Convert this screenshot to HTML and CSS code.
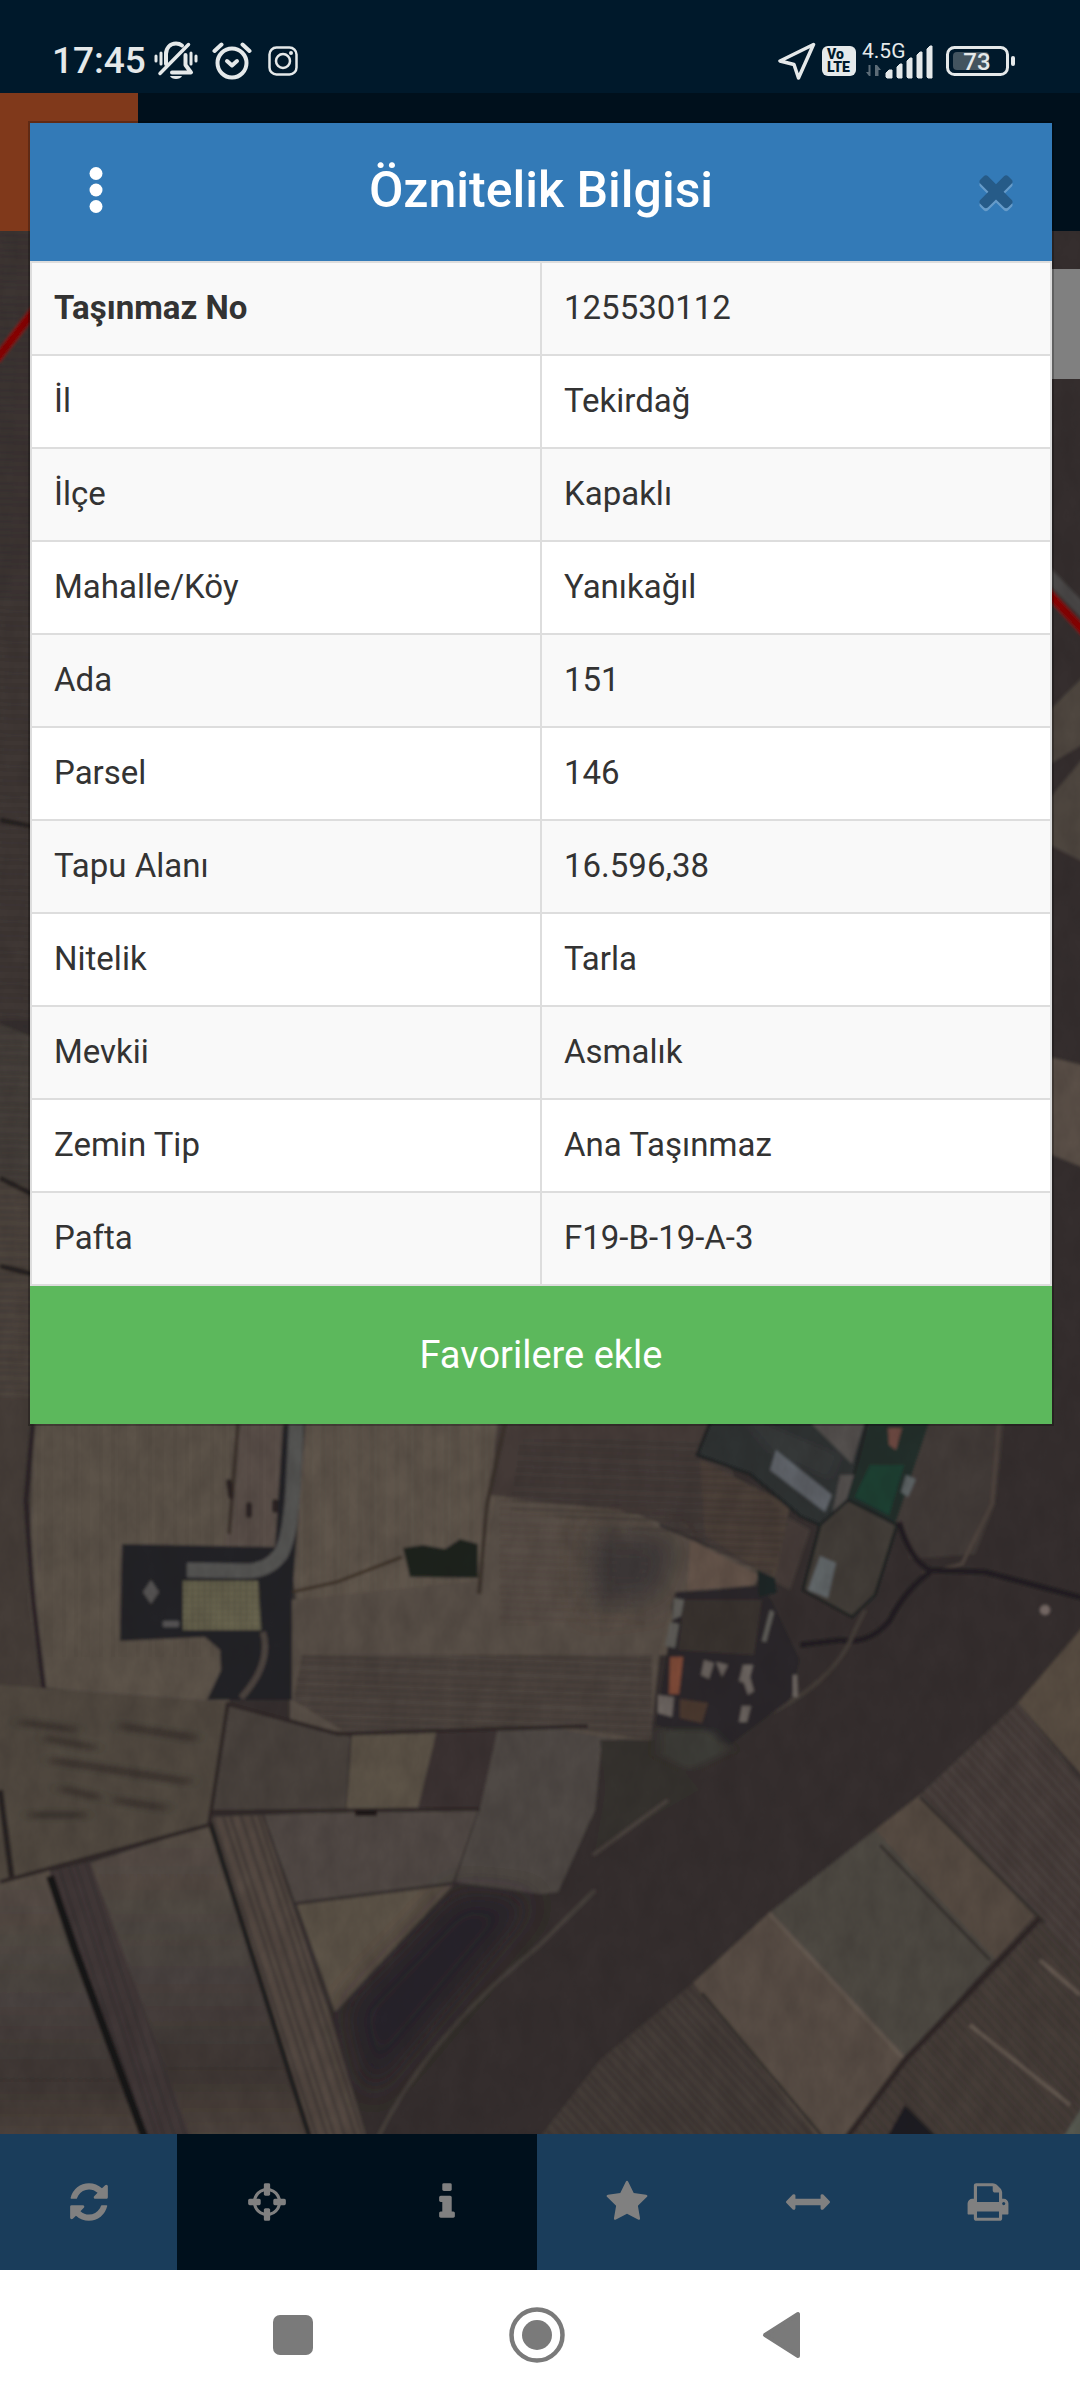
FILE: index.html
```html
<!DOCTYPE html>
<html lang="tr">
<head>
    <meta charset="UTF-8">
    <meta name="viewport" content="width=device-width, initial-scale=1.0">
    <title>Parsel Sorgu</title>
    <link rel="stylesheet" href="styles.css">
</head>
<body>
    <!-- Durum çubuğu -->
    <div class="status-bar">
        <div class="status-left">
            <span class="clock">17:45</span>
            <svg class="icon-bell" width="44" height="40" viewBox="0 0 44 40" fill="none" stroke="currentColor" stroke-width="4" stroke-linecap="round">
                <path d="M2 15v5M7 12v11M37 12v11M42 15v5" stroke-width="3"/>
                <path d="M12 23V13c0-6 4-10.500 10-10.500 2.500 0 4.500.8 6 2"/>
                <path d="M34.500 3.500 6 32.500" stroke-width="3.500"/>
                <path d="M31.500 14v10l5.500 7.500H18" stroke-linejoin="round"/>
                <path d="M16 35h12c-1.500 4-10.500 4-12 0z" fill="currentColor" stroke="none"/>
            </svg>
            <svg class="icon-alarm" width="40" height="40" viewBox="0 0 40 40" fill="none" stroke="currentColor" stroke-width="4" stroke-linecap="round">
                <circle cx="20" cy="22" r="14.500"/>
                <path d="m2.500 10 7-6.500M37.500 10l-7-6.500"/>
                <path d="m15 20 5 4.500 5-4.500" stroke-linejoin="round"/>
            </svg>
            <svg class="icon-insta" width="30" height="30" viewBox="0 0 30 30" fill="none" stroke="currentColor" stroke-width="2.500">
                <rect x="1.500" y="1.500" width="27" height="27" rx="7"/>
                <circle cx="15" cy="15" r="7"/>
                <circle cx="23" cy="7" r="2" fill="currentColor" stroke="none"/>
            </svg>
        </div>
        <div class="status-right">
            <svg width="38" height="38" viewBox="0 0 38 38" fill="none" stroke="currentColor" stroke-width="3.500" stroke-linejoin="round">
                <path d="M35.500 2.500 2 19l14 3.500 4.500 13.500z"/>
            </svg>
            <span class="volte"><span>Vo</span><span>LTE</span></span>
            <svg class="signal" width="72" height="36" viewBox="0 0 72 36" fill="currentColor">
                <text x="0" y="15" font-size="21">4.5G</text>
                <path d="M8.500 22v11H7l-3-4h2.500v-7zM13 33V22h2l4 5h-2.500v6z" opacity=".4"/>
                <path d="M24 34v-4l3-3h3v8h-5zM35 34V24l3-3h2v14h-4zM45 34V18l3-3h2v20h-4zM55 34V12l3-3h2v26h-4zM65 34V6l3-3h2v32h-4z" stroke="currentColor"/>
            </svg>
            <svg class="battery" width="70" height="30" viewBox="0 0 70 30">
                <rect x="1.500" y="1.500" width="60" height="27" rx="7" fill="none" stroke="currentColor" stroke-width="3"/>
                <rect x="7" y="6" width="36" height="18" rx="4" fill="#43545f"/>
                <rect x="65" y="10" width="4" height="10" rx="2" fill="currentColor"/>
                <text x="31" y="24" font-size="24" font-weight="500" text-anchor="middle" fill="currentColor">73</text>
            </svg>
        </div>
    </div>

    <header class="app-header">
        <div class="logo"></div>
    </header>

    <!-- Harita -->
    <main class="map">
        <svg class="map-image" viewBox="0 231 1080 1903" preserveAspectRatio="xMidYMid slice" aria-hidden="true">
            <defs>
                <pattern id="v" width="37" height="40" patternUnits="userSpaceOnUse"><path d="M2 0v40M9 0v40M14 0v40M27 0v40" stroke="#3d3531" stroke-width="2" opacity=".2"/></pattern>
                <pattern id="h" width="40" height="31" patternUnits="userSpaceOnUse" patternTransform="rotate(2)"><path d="M0 2h40M0 8h40M0 18h40M0 25h40" stroke="#2c2625" stroke-width="3" opacity=".3"/></pattern>
                <pattern id="d" width="23" height="40" patternUnits="userSpaceOnUse" patternTransform="rotate(-42)"><path d="M2 0v40M10 0v40M16 0v40" stroke="#2c2625" stroke-width="3" opacity=".3"/></pattern>
                <pattern id="s" width="27" height="40" patternUnits="userSpaceOnUse" patternTransform="rotate(-18)"><path d="M2 0v40M9 0v40M19 0v40" stroke="#2a2425" stroke-width="3" opacity=".4"/></pattern>
                <pattern id="g" width="6" height="6" patternUnits="userSpaceOnUse"><path d="M0 0h6M0 0v6" stroke="#4b4838" stroke-width="2"/></pattern>
                <linearGradient id="fade" x1="0" y1="0" x2="0" y2="1">
                    <stop offset="0" stop-color="#574e45"/>
                    <stop offset=".45" stop-color="#4a4340"/>
                    <stop offset=".75" stop-color="#3e3633"/>
                    <stop offset="1" stop-color="#51473f"/>
                </linearGradient>
                <filter id="soft" x="-.02" y="-.02" width="1.04" height="1.04"><feGaussianBlur stdDeviation="1.500"/></filter>
                <filter id="blot" x="-1" y="-1" width="3" height="3"><feGaussianBlur stdDeviation="14"/></filter>
                <filter id="smear" x="-.2" y="-.2" width="1.400" height="1.400"><feGaussianBlur stdDeviation="6 2"/></filter>
                <filter id="grain" x="0" y="0" width="1" height="1" color-interpolation-filters="sRGB">
                    <feTurbulence type="fractalNoise" baseFrequency=".05 .03" numOctaves="4" seed="4"/>
                    <feColorMatrix values="0 0 0 0 .12  0 0 0 0 .1  0 0 0 0 .1  1.2 0 0 0 -.3"/>
                </filter>
            </defs>
            <g filter="url(#soft)">
                <rect x="-20" y="211" width="1120" height="1943" fill="#352f2e"/>

                <!-- sol kenar -->
                <path d="M-10 221h50v380h-50z" fill="#3c3532"/>
                <path d="M-10 600h50v420h-50z" fill="#403835"/>
                <path d="M-10 1020l50 20v150l-50-15z" fill="#46413b"/>
                <path d="M-10 1175l50 15v260h-50z" fill="#4e453d"/>
                <path d="M0 820l40 8M0 1178l40 20M0 1266l40 10" stroke="#221e1d" stroke-width="5"/>
                <path d="M-10 221h50v1210h-50z" fill="url(#h)"/>
                <path d="M-4 360l44-57" stroke="#8b0000" stroke-width="9"/>

                <!-- sağ kenar -->
                <path d="M1040 720l50-50v70l-50 30zM1040 810l50-60v115l-50-25z" fill="#50473f"/>
                <path d="M1040 1055l50 12v103l-50-20z" fill="#5a4f47"/>
                <path d="M1040 566l50 52" stroke="#4b4a48" stroke-width="12"/>
                <path d="M1040 584l50 54" stroke="#8b0000" stroke-width="9"/>

                <!-- üst tarlalar -->
                <path d="M-10 1400h70l-18 290H-10z" fill="#453d38"/>
                <path d="M34 1400h210l-15 310-187-23-13-87z" fill="#5c524a"/>
                <path d="M243 1400h50l-6 150h-62z" fill="#5a5048"/>
                <path d="M303 1400h205l-10 95 160 20 20 140-373 2-12-80z" fill="#5e554b"/>
                <path d="M34 1400h475l-20 257H42z" fill="url(#v)"/>
                <path d="M500 1400h200l40 90 70 40-20 60-90-50-60-25-150-20z" fill="#443b38"/>
                <path d="M700 1460l90 45-15 75-70-45z" fill="#4b4039"/>
                <path d="M495 1497l45 5 80 8 100 42 42 20-7 13-45 5-35 2-15 58-10 90-360-10V1600l192-20z" fill="#594f46"/>
                <path d="M590 1530l90 8-20 60-70 10z" fill="#3e3938" filter="url(#blot)"/>
                <path d="M690 1540l68 35-5 10-65 5z" fill="#63534a"/>
                <path d="M500 1495l150 20-5 110H500z" fill="url(#h)" opacity=".4"/>
                <path d="M302 1655h350v85l-107-15-200 7-52-32z" fill="#4e453f"/>
                <path d="M302 1655h350v85l-107-15-200 7-52-32z" fill="url(#h)"/>
                <path d="M520 1440h190l80 80-20 60-90-45-170-25z" fill="url(#h)"/>
                <path d="M33 1424l-7 76 7 100 11 90" fill="none" stroke="#2a2425" stroke-width="5"/>
                <path d="M505 1424l-18 80-8 90M238 1424l-9 110" fill="none" stroke="#3a312c" stroke-width="4"/>
                <path d="M229 1482l2 14M249 1505v10M275 1502v8" stroke="#2a2422" stroke-width="6" stroke-linecap="round"/>
                <path d="M292 1592l45-10 65-25" fill="none" stroke="#3c3026" stroke-width="3"/>
                <path d="M403 1548l20-3 22 4 15-10 18 5v34l-68-1z" fill="#1b201e"/>

                <!-- tesis -->
                <path d="M122 1544l153 3 8-123h22l-13 176v100h-85l14-30-1-20-15-13-85 4z" fill="#242325"/>
                <path d="M297 1410l-4 80q-3 50-13 65-12 16-35 16l-58-1" fill="none" stroke="#555453" stroke-width="15"/>
                <path d="M183 1581h75l3 49h-78z" fill="#696550"/>
                <path d="M183 1581h75l3 49h-78z" fill="url(#g)" opacity=".6"/>
                <path d="M151 1580l8 12-8 12-8-12zM163 1621h16v6h-16z" fill="#555252"/>
                <path d="M263 1632q9 32-22 66" fill="none" stroke="#4d443f" stroke-width="6"/>

                <!-- orta tarlalar -->
                <path d="M-10 1684l238 18-19 123-219 60z" fill="#514940"/>
                <path d="M20 1722l55 8M120 1726l75 12M45 1738l50 10M50 1760l140 22M60 1788l40 10M115 1800l50 8M30 1815h55" stroke="#302a26" stroke-width="7" opacity=".7" filter="url(#smear)"/>
                <path d="M0 1790l12 90" stroke="#282221" stroke-width="6"/>
                <path d="M228 1702l122 35-5 78-135-3z" fill="#4a433e"/>
                <path d="M352 1735l85-3-19 78-72 5z" fill="#5b5247"/>
                <path d="M437 1730h61l-16 78h-64z" fill="#3b3232"/>
                <path d="M498 1728l42-3 80 15 5 60-35 20-30 77-105-15 26-78z" fill="#4f4844"/>
                <path d="M264 1815l214-5-25 72-158 20z" fill="#514a45"/>
                <path d="M297 1905l156-20-118 127z" fill="#5c5246"/>
                <path d="M-10 1884l60-14 100 280H-10z" fill="url(#fade)"/>
                <path d="M90 1863l119-38 112 325H190z" fill="url(#fade)"/>
                <path d="M50 1872l40-10 105 288h-50z" fill="#423839"/>
                <path d="M210 1817l52-2 68 200 40 135h-54z" fill="#544942"/>
                <path d="M50 1872l40-10 105 288h-50zM210 1817l52-2 68 200 40 135h-54z" fill="url(#s)"/>
                <path d="M50 1876l25 74 75 202" fill="none" stroke="#151314" stroke-width="8"/>
                <path d="M210 1822l105 332" fill="none" stroke="#1f1b1b" stroke-width="5"/>
                <path d="M0 1882l209-57 19-123M209 1812l271-3M228 1704l110 30 250-8" fill="none" stroke="#2e2826" stroke-width="4"/>
                <path d="M355 1813h22" stroke="#1c1615" stroke-width="6"/>

                <!-- koyu arazi -->
                <path d="M335 2015l120-130 85 9 18-2 37-82 7-70 78 10 120-50 290-286v286l-70 5-100 90-140 110-85 75-95 80-70 95H372z" fill="#342e2d"/>
                <path d="M372 2150q50-110 168-205l55-55" fill="none" stroke="#463f3b" stroke-width="4"/>
                <path d="M600 1740l60 0 40 50-105 60 10-60z" fill="#35302d"/>
                <path d="M593 1855l75-55" stroke="#4a423e" stroke-width="4"/>
                <path d="M350 2010l110-115 70 7-160 190z" fill="#28242a" filter="url(#blot)"/>

                <!-- çiftlik, sağ üst -->
                <path d="M890 1410h115l-10 94-20 50-65 5-15-40z" fill="#433a37"/>
                <path d="M1000 1410l-8 94-30 60-40 10" fill="none" stroke="#51463f" stroke-width="3"/>
                <path d="M697 1455l18-45h155l-30 124-40-18-50-42z" fill="#2e3132" stroke="#1c2022" stroke-width="3"/>
                <path d="M735 1410l105 45-10 25-60-28z" fill="#343739" filter="url(#smear)"/>
                <path d="M776 1450l56 45-7 17-55-42z" fill="#5f6469"/>
                <path d="M815 1414h52l-15 50-40-40zM840 1475h14l-18 60h-8z" fill="#524f4e"/>
                <path d="M872 1414h60l-37 111-47-25z" fill="#202f2b"/>
                <path d="M870 1465h34l-15 50-34-18z" fill="#1d4133"/>
                <path d="M888 1428h14l-6 22-7-5z" fill="#6a463f"/>
                <path d="M906 1475l10 4-8 18-7-5z" fill="#5b6264"/>
                <path d="M848 1500l49 25-22 70-23 22-49-27 17-65z" fill="#433d38" stroke="#1e2021" stroke-width="3"/>
                <path d="M820 1556l16 7-8 35-20-8z" fill="#62676a"/>
                <path d="M899 1522q11 38 31 48l55 2 105 28M930 1572q-25 18-40 48-20 25-50 20l-40 5" fill="none" stroke="#211d20" stroke-width="6"/>
                <path d="M755 1720q80-35 100-90l10-20" fill="none" stroke="#453d39" stroke-width="4"/>
                <circle cx="1045" cy="1610" r="5" fill="#776a66"/>

                <!-- çiftlik, orta -->
                <path d="M677 1592l85-6 10 15 28 59-10 40-60 45-75-20z" fill="#2a272a"/>
                <path d="M684 1600h78l-8 55-76-5z" fill="#38322e"/>
                <path d="M674 1598l10 2-3 16-9 4zM670 1622l9 2-4 24-10-2zM770 1610l4 2-8 30-4-1z" fill="#62615c"/>
                <path d="M670 1657h13l-4 37h-10z" fill="#814b37"/>
                <path d="M658 1695l16 2-2 20-14-4zM704 1660l10 3-5 16-8-4zM716 1662l12 3-6 12zM743 1665h10l-3 12 4 14-6 4-4-12-5-2zM742 1706h9l-4 16h-8zM793 1675h4l1 22h-5z" fill="#6b635e"/>
                <path d="M680 1699l28 4-6 20-22-5z" fill="#4a372f"/>
                <path d="M660 1730h50l20 20-40 20-30-15z" fill="#3c3d38" filter="url(#smear)"/>
                <path d="M757 1570l18 8 2 15-18 4z" fill="#1f2627"/>

                <!-- sağ alt tarlalar -->
                <path d="M1018 1703l72-84v165z" fill="#594e42"/>
                <path d="M920 1795l98-92 72 88v187l-55-55z" fill="#49403c"/>
                <path d="M875 1830l45-35 115 120-40 45z" fill="#564c42"/>
                <path d="M769 1913l106-83 120 128-90 102z" fill="#4e4843"/>
                <path d="M693 1983l76-70 136 147-60 90h-30z" fill="#584e45"/>
                <path d="M1035 1915l55 55v180H840l65-90z" fill="#463d39"/>
                <path d="M600 2060l93-77 135 167H530z" fill="#453c38"/>
                <path d="M920 1795l98-92 72 88v187l-55-55zM1035 1915l55 55v180H840l65-90zM600 2060l93-77 135 167H530z" fill="url(#d)"/>
                <path d="M769 1913l136 147M970 2025l100 80M1040 1960l40 35" stroke="#645950" stroke-width="4"/>
                <path d="M920 1797l125 126M880 1845l110 115M702 1993l130 155" stroke="#332d2a" stroke-width="3"/>
                <path d="M1040 1918l-135 142-66 88" fill="none" stroke="#2e2827" stroke-width="6"/>
                <path d="M905 2105l45 45h-70z" fill="#1f1d22"/>
                <path d="M1090 2095v55h-35z" fill="#555850"/>
            </g>
            <rect y="231" width="1080" height="1903" filter="url(#grain)" opacity=".22"/>
        </svg>
        <div class="map-control"></div>
    </main>

    <!-- Alt araç çubuğu -->
    <nav class="toolbar">
        <button type="button" aria-label="Yenile">
            <svg viewBox="0 0 1792 1792"><path d="M1639 1056q0 5-1 7-64 268-268 434.500t-478 166.500q-146 0-282.500-55t-243.500-157l-129 129q-19 19-45 19t-45-19-19-45v-448q0-26 19-45t45-19h448q26 0 45 19t19 45-19 45l-137 137q71 66 161 102t187 36q134 0 250-65t186-179q11-17 53-117 8-23 30-23h192q13 0 22.500 9.500t9.500 22.500zm25-800v448q0 26-19 45t-45 19h-448q-26 0-45-19t-19-45 19-45l138-138q-148-137-349-137-134 0-250 65t-186 179q-11 17-53 117-8 23-30 23h-199q-13 0-22.500-9.500t-9.500-22.500v-7q65-268 270-434.500t480-166.500q146 0 284 55.500t245 156.500l130-129q19-19 45-19t45 19 19 45z"/></svg>
        </button>
        <button type="button" class="active" aria-label="Konum">
            <svg viewBox="0 0 1792 1792"><path d="M1325 1024h-109q-26 0-45-19t-19-45v-128q0-26 19-45t45-19h109q-32-108-112.500-188.500t-188.500-112.500v109q0 26-19 45t-45 19h-128q-26 0-45-19t-19-45v-109q-108 32-188.500 112.500t-112.500 188.500h109q26 0 45 19t19 45v128q0 26-19 45t-45 19h-109q32 108 112.500 188.500t188.500 112.500v-109q0-26 19-45t45-19h128q26 0 45 19t19 45v109q108-32 188.500-112.500t112.500-188.500zm339-192v128q0 26-19 45t-45 19h-143q-37 161-154.500 278.500t-278.500 154.500v143q0 26-19 45t-45 19h-128q-26 0-45-19t-19-45v-143q-161-37-278.500-154.500t-154.500-278.500h-143q-26 0-45-19t-19-45v-128q0-26 19-45t45-19h143q37-161 154.500-278.500t278.500-154.500v-143q0-26 19-45t45-19h128q26 0 45 19t19 45v143q161 37 278.500 154.500t154.500 278.500h143q26 0 45 19t19 45z"/></svg>
        </button>
        <button type="button" class="active" aria-label="Bilgi">
            <svg viewBox="0 0 1792 1792"><path d="M1216 1344v128q0 26-19 45t-45 19h-512q-26 0-45-19t-19-45v-128q0-26 19-45t45-19h64v-384h-64q-26 0-45-19t-19-45v-128q0-26 19-45t45-19h384q26 0 45 19t19 45v576h64q26 0 45 19t19 45zm-128-1152v192q0 26-19 45t-45 19h-256q-26 0-45-19t-19-45v-192q0-26 19-45t45-19h256q26 0 45 19t19 45z"/></svg>
        </button>
        <button type="button" aria-label="Favoriler">
            <svg viewBox="0 0 1792 1792"><path d="M1728 647q0 22-26 48l-363 354 86 500q1 7 1 20 0 21-10.500 35.500t-30.500 14.500q-19 0-40-12l-449-236-449 236q-22 12-40 12-21 0-31.500-14.500t-10.500-35.500q0-6 2-20l86-500-364-354q-25-27-25-48 0-37 56-46l502-73 225-455q19-41 49-41t49 41l225 455 502 73q56 9 56 46z"/></svg>
        </button>
        <button type="button" aria-label="Ölçüm">
            <svg viewBox="0 0 1792 1792"><path d="M1792 896q0 26-19 45l-256 256q-19 19-45 19t-45-19-19-45v-128h-1024v128q0 26-19 45t-45 19-45-19l-256-256q-19-19-19-45t19-45l256-256q19-19 45-19t45 19 19 45v128h1024v-128q0-26 19-45t45-19 45 19l256 256q19 19 19 45z"/></svg>
        </button>
        <button type="button" aria-label="Yazdır">
            <svg viewBox="0 0 1792 1792"><path d="M448 1536h896v-256h-896v256zm0-640h896v-384h-160q-40 0-68-28t-28-68v-160h-640v640zm1152 64q0-26-19-45t-45-19-45 19-19 45 19 45 45 19 45-19 19-45zm128 0v416q0 13-9.500 22.500t-22.500 9.500h-224v160q0 40-28 68t-68 28h-960q-40 0-68-28t-28-68v-160h-224q-13 0-22.500-9.500t-9.500-22.500v-416q0-79 56.500-135.500t135.500-56.500h64v-544q0-40 28-68t68-28h672q40 0 88 20t76 48l152 152q28 28 48 76t20 88v256h64q79 0 135.500 56.500t56.500 135.500z"/></svg>
        </button>
    </nav>

    <nav class="system-nav">
        <button type="button" aria-label="Son uygulamalar">
            <svg viewBox="0 0 56 56"><rect x="8" y="8" width="40" height="40" rx="7"/></svg>
        </button>
        <button type="button" aria-label="Ana ekran">
            <svg viewBox="0 0 56 56"><circle cx="28" cy="28" r="25.500" fill="none" stroke="currentColor" stroke-width="4.500"/><circle cx="28" cy="28" r="15"/></svg>
        </button>
        <button type="button" aria-label="Geri">
            <svg viewBox="0 0 56 56"><path d="M12 28 45 7v42z" stroke="currentColor" stroke-width="4" stroke-linejoin="round"/></svg>
        </button>
    </nav>

    <!-- Öznitelik penceresi -->
    <div class="modal" role="dialog" aria-labelledby="modal-title">
        <div class="modal-header">
            <button type="button" class="btn-menu" aria-label="Menü">
                <svg width="14" height="46" viewBox="0 0 14 46" fill="currentColor"><circle cx="7" cy="6.500" r="6.500"/><circle cx="7" cy="23" r="6.500"/><circle cx="7" cy="39.500" r="6.500"/></svg>
            </button>
            <h4 id="modal-title">Öznitelik Bilgisi</h4>
            <button type="button" class="btn-close" aria-label="Kapat">
                <svg width="50" height="50" viewBox="0 0 1792 1792"><path d="M1490 1322q0 40-28 68l-136 136q-28 28-68 28t-68-28l-294-294-294 294q-28 28-68 28t-68-28l-136-136q-28-28-28-68t28-68l294-294-294-294q-28-28-28-68t28-68l136-136q28-28 68-28t68 28l294 294 294-294q28-28 68-28t68 28l136 136q28 28 28 68t-28 68l-294 294 294 294q28 28 28 68z"/></svg>
            </button>
        </div>
        <table class="info-table">
            <tr><th scope="row" class="key">Taşınmaz No</th><td>125530112</td></tr>
            <tr><th scope="row">İl</th><td>Tekirdağ</td></tr>
            <tr><th scope="row">İlçe</th><td>Kapaklı</td></tr>
            <tr><th scope="row">Mahalle/Köy</th><td>Yanıkağıl</td></tr>
            <tr><th scope="row">Ada</th><td>151</td></tr>
            <tr><th scope="row">Parsel</th><td>146</td></tr>
            <tr><th scope="row">Tapu Alanı</th><td>16.596,38</td></tr>
            <tr><th scope="row">Nitelik</th><td>Tarla</td></tr>
            <tr><th scope="row">Mevkii</th><td>Asmalık</td></tr>
            <tr><th scope="row">Zemin Tip</th><td>Ana Taşınmaz</td></tr>
            <tr><th scope="row">Pafta</th><td>F19-B-19-A-3</td></tr>
        </table>
        <button type="button" class="btn-favori">Favorilere ekle</button>
    </div>
</body>
</html>
```
FILE: styles.css
```css
* {
    box-sizing: border-box;
}
body {
    font-family: Roboto, sans-serif;
    margin: 0;
    min-height: 100vh;
    display: flex;
    flex-direction: column;
    position: relative;
    color: #333;
    background-color: #00101c;
}
button {
    font-family: inherit;
    border: none;
    padding: 0;
    background: none;
    cursor: pointer;
}
svg {
    display: block;
}

/* durum çubuğu */
.status-bar {
    height: 93px;
    padding: 28px 64px 0 52px;
    display: flex;
    justify-content: space-between;
    align-items: center;
    background-color: #00192b;
    color: #e5e9ea;
}
.status-left,
.status-right {
    display: flex;
    align-items: center;
}
.clock {
    font-size: 37px;
    font-weight: 500;
    line-height: 40px;
    margin-right: 8px;
}
.icon-alarm {
    margin: 0 16px 0 14px;
}
.status-right {
    gap: 6px;
}
.volte {
    width: 34px;
    height: 30px;
    border-radius: 6px;
    background-color: #e5e9ea;
    color: #00192b;
    font-size: 14px;
    font-weight: 900;
    line-height: 13px;
    padding: 2px 0 2px 5px;
    display: flex;
    flex-direction: column;
}
.signal {
    overflow: visible;
}
.battery {
    margin-left: 6px;
}

.app-header {
    height: 138px;
    background-color: #00101c;
}
.logo {
    width: 138px;
    height: 100%;
    background-color: #80391b;
}

/* harita */
.map {
    flex: 1;
    min-height: 1300px;
    position: relative;
    overflow: hidden;
}
.map-image {
    position: absolute;
    width: 100%;
    height: 100%;
}
.map-control {
    position: absolute;
    top: 38px;
    right: 0;
    width: 110px;
    height: 110px;
    background-color: #808080;
}

/* alt araç çubuğu */
.toolbar {
    height: 136px;
    padding-right: 2px;
    display: grid;
    grid-template-columns: 177px repeat(5, 1fr);
    background-color: #1a3d5b;
}
.toolbar button {
    display: flex;
    align-items: center;
    justify-content: center;
    color: #808080;
}
.toolbar .active {
    background-color: #00101c;
}
.toolbar svg {
    width: 44px;
    height: 44px;
    fill: currentColor;
}

.system-nav {
    height: 130px;
    padding-right: 6px;
    display: flex;
    justify-content: center;
    align-items: center;
    gap: 188px;
    background-color: white;
}
.system-nav button {
    width: 56px;
    height: 56px;
    color: #7a7a7a;
}
.system-nav svg {
    fill: currentColor;
}

/* öznitelik penceresi */
.modal {
    position: absolute;
    top: 123px;
    left: 30px;
    right: 28px;
    background-color: white;
    box-shadow: 0 0 0 2px rgba(0, 0, 0, 0.25);
}
.modal-header {
    height: 138px;
    padding: 0 31px 5px 59px;
    display: grid;
    grid-template-columns: 50px 1fr 50px;
    align-items: center;
    background-color: #337ab7;
    color: white;
}
.modal-header h4 {
    margin: 0;
    padding-right: 28px;
    font-size: 50px;
    font-weight: 500;
    line-height: 56px;
    text-align: center;
}
.btn-menu {
    width: 14px;
    color: white;
}
.btn-close {
    opacity: 0.25;
    filter: drop-shadow(0 3px 0 white);
}
.info-table {
    width: 100%;
    border-collapse: collapse;
    table-layout: fixed;
    font-size: 33px;
    line-height: 47px;
}
.info-table th,
.info-table td {
    width: 50%;
    padding: 21px 22px 23px;
    border: 2px solid #ddd;
    font-weight: 400;
    text-align: left;
}
.info-table .key {
    font-weight: 700;
}
.info-table tr:nth-child(odd) {
    background-color: #f9f9f9;
}
.btn-favori {
    display: block;
    width: 100%;
    height: 138px;
    background-color: #5cb85c;
    color: white;
    font-size: 38px;
}
```
